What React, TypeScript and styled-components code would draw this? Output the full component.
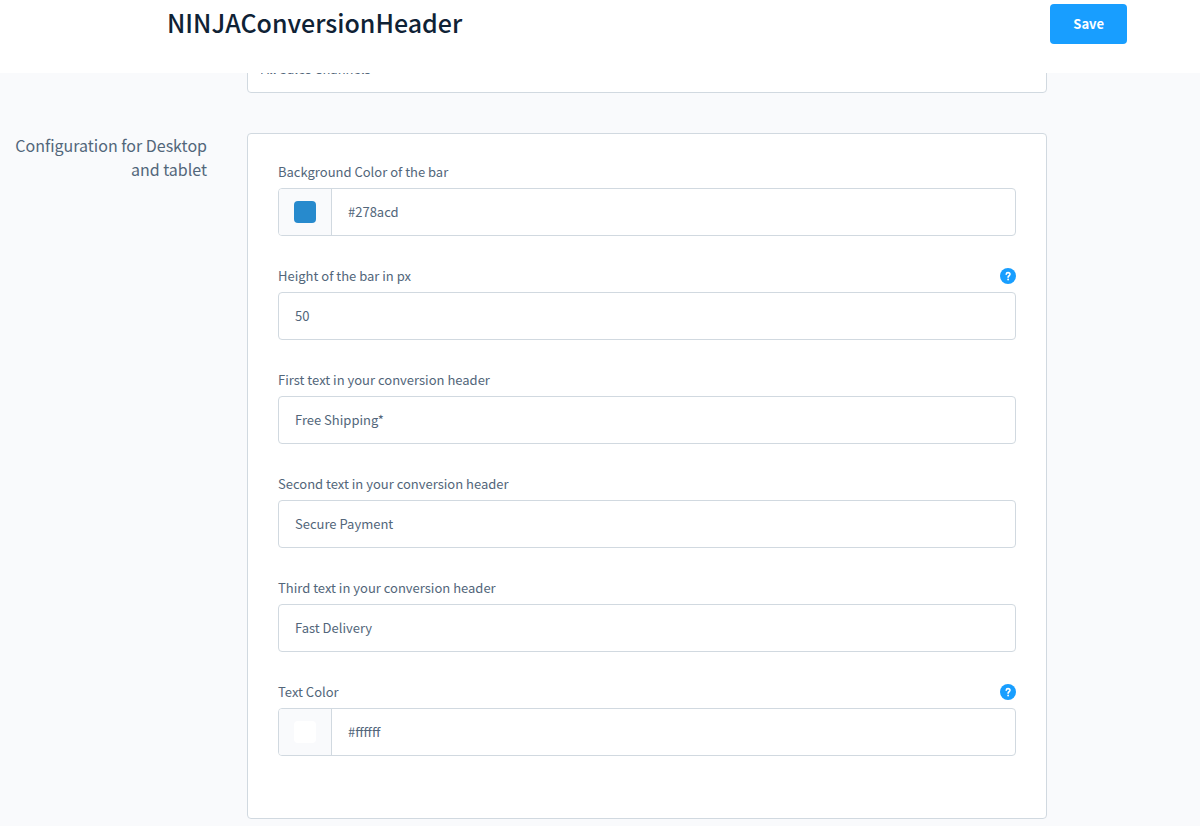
import React, { useState } from 'react';
import styled, { createGlobalStyle } from 'styled-components';

const GlobalStyle = createGlobalStyle`
  *, *::before, *::after { box-sizing: border-box; }
  body {
    margin: 0;
    background: #f9fafc;
    color: #52667a;
    font-family: "Noto Sans CJK SC", "Open Sans", sans-serif;
    font-size: 13px;
    line-height: 24px;
  }
  button, input, select { font: inherit; color: inherit; }
`;

const Header = styled.header`
  display: flex;
  align-items: flex-start;
  justify-content: space-between;
  min-height: 73px;
  padding: 4px 73px 0 167px;
  background: #fff;
`;

const Title = styled.h1`
  margin: 0;
  font-size: 25px;
  line-height: 36px;
  font-weight: 500;
  color: #0f2235;
`;

const SaveButton = styled.button`
  height: 40px;
  padding: 0 23px;
  border: 0;
  border-radius: 4px;
  background: #189eff;
  color: #fff;
  font-weight: 700;
  cursor: pointer;
`;

const Section = styled.section`
  display: grid;
  grid-template-columns: minmax(0, 1fr) minmax(0, 800px);
  column-gap: 40px;
  padding-right: 153px;
`;

const ChannelSection = styled(Section)`
  grid-template-rows: 20px;
  margin-bottom: 40px;
  align-items: end;
  overflow: hidden;
`;

const ChannelSelect = styled.select`
  grid-column: 2;
  width: 100%;
  height: 48px;
  padding: 0 13px;
  border: 1px solid #d1d9e0;
  border-radius: 4px;
  background: #fff;
  appearance: none;
`;

const SectionTitle = styled.h2`
  margin: 0;
  font-size: 16px;
  line-height: 24px;
  font-weight: 400;
  text-align: right;
`;

const Card = styled.form`
  display: flex;
  flex-direction: column;
  gap: 28px;
  padding: 26px 30px 62px;
  border: 1px solid #d1d9e0;
  border-radius: 4px;
  background: #fff;
`;

const LabelRow = styled.div`
  display: flex;
  align-items: center;
  justify-content: space-between;
  margin-bottom: 4px;
`;

const HelpButton = styled.button`
  display: flex;
  width: 16px;
  height: 16px;
  padding: 0;
  border: 0;
  border-radius: 50%;
  background: #189eff;
  color: #fff;
`;

const FieldBox = styled.div`
  display: flex;
  height: 48px;
  border: 1px solid #d1d9e0;
  border-radius: 4px;
  background: #fff;
  overflow: hidden;
`;

const SwatchCell = styled.div`
  display: flex;
  align-items: center;
  justify-content: center;
  width: 53px;
  flex: none;
  border-right: 1px solid #d1d9e0;
  background: #f9fafc;
`;

const Swatch = styled.button`
  width: 22px;
  height: 22px;
  padding: 0;
  border: 0;
  border-radius: 4px;
`;

const TextInput = styled.input`
  flex: 1;
  min-width: 0;
  padding: 0 16px;
  border: 0;
  outline: 0;
  background: transparent;
`;

interface FieldProps {
  id: string;
  label: string;
  initial: string;
  color?: boolean;
  help?: boolean;
}

function Field({ id, label, initial, color, help }: FieldProps) {
  const [value, setValue] = useState(initial);
  return (
    <div>
      <LabelRow>
        <label htmlFor={id}>{label}</label>
        {help && (
          <HelpButton type="button" aria-label={`Help: ${label}`}>
            <svg width="16" height="16" viewBox="0 0 16 16" fill="none" stroke="currentColor" strokeWidth="1.6" strokeLinecap="round" strokeLinejoin="round" aria-hidden="true">
              <path d="M6.2 6.200C6.300 5.100 7 4.600 8 4.600c1.200 0 2 .7 2 1.700 0 1.500-1.900 1.400-1.900 2.900" />
              <circle cx="8.100" cy="11.500" r="0.900" fill="currentColor" stroke="none" />
            </svg>
          </HelpButton>
        )}
      </LabelRow>
      <FieldBox>
        {color && (
          <SwatchCell>
            <Swatch type="button" aria-label={`Pick ${label}`} style={{ background: value }} />
          </SwatchCell>
        )}
        <TextInput id={id} type="text" value={value} onChange={(e) => setValue(e.target.value)} />
      </FieldBox>
    </div>
  );
}

const fields: FieldProps[] = [
  { id: 'bar-background', label: 'Background Color of the bar', initial: '#278acd', color: true },
  { id: 'bar-height', label: 'Height of the bar in px', initial: '50', help: true },
  { id: 'first-text', label: 'First text in your conversion header', initial: 'Free Shipping*' },
  { id: 'second-text', label: 'Second text in your conversion header', initial: 'Secure Payment' },
  { id: 'third-text', label: 'Third text in your conversion header', initial: 'Fast Delivery' },
  { id: 'text-color', label: 'Text Color', initial: '#ffffff', color: true, help: true },
];

export default function App() {
  return (
    <>
      <GlobalStyle />
      <Header>
        <Title>NINJAConversionHeader</Title>
        <SaveButton type="button">Save</SaveButton>
      </Header>
      <main>
        <ChannelSection>
          <ChannelSelect aria-label="Sales Channel">
            <option>All Sales Channels</option>
          </ChannelSelect>
        </ChannelSection>
        <Section>
          <SectionTitle>Configuration for Desktop and tablet</SectionTitle>
          <Card>
            {fields.map((field) => (
              <Field key={field.id} {...field} />
            ))}
          </Card>
        </Section>
      </main>
    </>
  );
}
